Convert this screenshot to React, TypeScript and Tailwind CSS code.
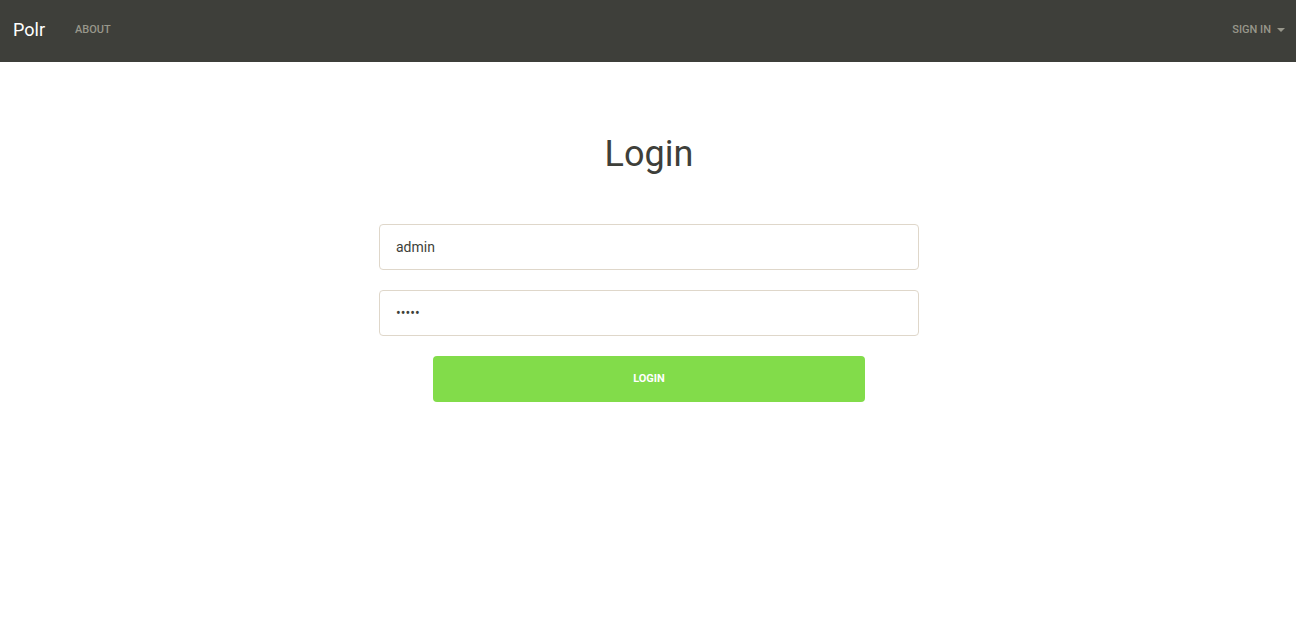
export default function App() {
  return (
    <div className="min-h-screen bg-white" style={{ fontFamily: "Roboto, 'Liberation Sans', sans-serif" }}>
      <nav className="h-[62px] bg-[#3e3f3a] flex items-center justify-between pl-[13px] pr-[11px] pb-[2px]">
        <div className="flex items-center">
          <span className="text-[18px] text-white leading-none">Polr</span>
          <span className="ml-[30px] text-[11px] font-medium text-[#98978b] uppercase">About</span>
        </div>
        <div className="flex items-center gap-[6px] text-[11px] font-medium text-[#98978b] uppercase">
          <span>Sign In</span>
          <span className="w-0 h-0 border-l-[4px] border-r-[4px] border-t-[4px] border-l-transparent border-r-transparent border-t-[#98978b]" />
        </div>
      </nav>

      <div className="flex flex-col items-center pt-[70px] pl-[2px]">
        <h1 className="text-[36px] leading-[44px] text-[#3e3f3a] font-normal">Login</h1>
        <form className="w-[540px] mt-[48px] flex flex-col items-center">
          <input
            className="w-full h-[46px] rounded-[4px] border border-[#dfd7ca] px-[16px] text-[14px] text-[#3e3f3a] outline-none"
            defaultValue="admin"
          />
          <input
            type="password"
            className="w-full h-[46px] mt-[20px] rounded-[4px] border border-[#dfd7ca] px-[16px] text-[14px] text-[#3e3f3a] outline-none"
            defaultValue="admin"
          />
          <button
            type="button"
            className="w-[432px] h-[46px] mt-[20px] rounded-[4px] bg-[#82dc4a] text-white text-[11px] font-bold uppercase"
          >
            Login
          </button>
        </form>
      </div>
    </div>
  );
}
